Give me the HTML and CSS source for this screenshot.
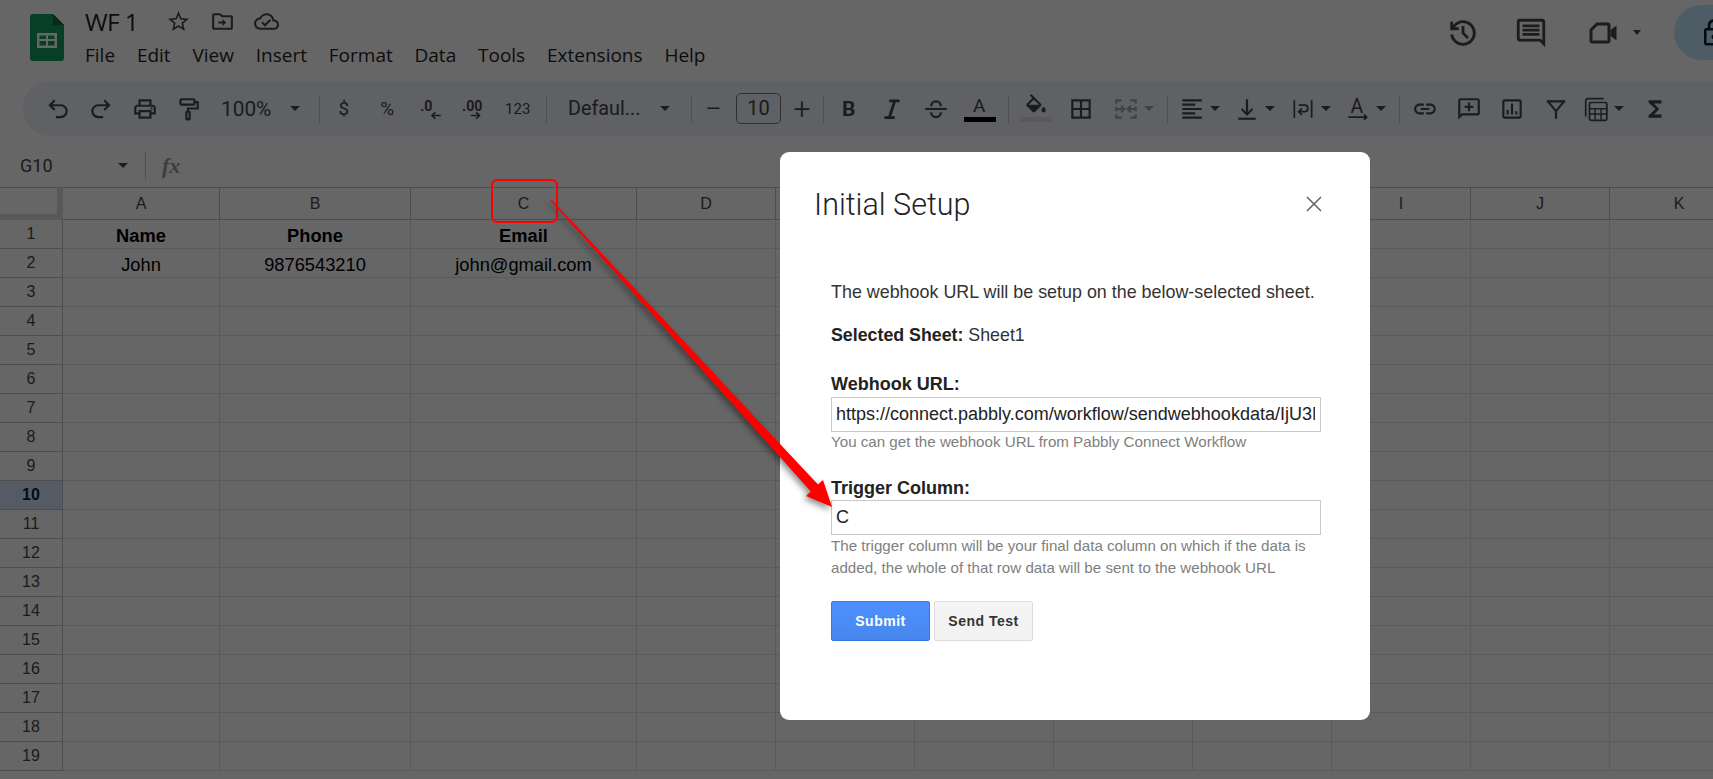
FILE: index.html
```html
<!DOCTYPE html>
<html lang="en">
<head>
    <meta charset="UTF-8">
    <title>WF 1 - Google Sheets</title>
    <link rel="stylesheet" href="styles.css">
</head>
<body>

    <header class="topbar">
        <svg class="logo" viewBox="0 0 34 47"><path fill="#0f9d58" d="M3 0h20l11 11v33a3 3 0 0 1-3 3H3a3 3 0 0 1-3-3V3a3 3 0 0 1 3-3z"/><path fill="#0a6b3c" d="M23 0l11 11H23z"/><path fill="#fff" d="M7 19h20v15H7zm2.500 2.500v3.500h6.500v-3.500zm8.500 0v3.500h6.500v-3.500zm-8.500 5.500v4.500h6.500v-4.500zm8.500 0v4.500h6.500v-4.500z" fill-rule="evenodd"/></svg>
        <div class="docinfo">
            <div class="titlerow">
                <span class="doctitle">WF 1</span>
                <svg class="ico-doc" viewBox="0 0 24 24"><path d="M22 9.240l-7.190-.62L12 2 9.190 8.630 2 9.240l5.460 4.730L5.820 21 12 17.270 18.180 21l-1.630-7.030L22 9.240zM12 15.400l-3.760 2.270 1-4.280-3.320-2.880 4.380-.38L12 6.100l1.710 4.040 4.380.38-3.320 2.880 1 4.280L12 15.400z"/></svg>
                <svg class="ico-doc" viewBox="0 0 24 24"><path d="M20 6h-8l-2-2H4c-1.100 0-2 .9-2 2v12c0 1.100.9 2 2 2h16c1.100 0 2-.9 2-2V8c0-1.100-.9-2-2-2zm0 12H4V6h5.170l2 2H20v10z"/><path d="M12 16.500l3.500-3.500-3.500-3.500v2.500H8v2h4z"/></svg>
                <svg class="ico-doc" viewBox="0 0 24 24"><path d="M19.350 10.040C18.670 6.590 15.640 4 12 4 9.110 4 6.600 5.640 5.350 8.040 2.340 8.360 0 10.910 0 14c0 3.310 2.690 6 6 6h13c2.760 0 5-2.240 5-5 0-2.640-2.050-4.780-4.650-4.960zM19 18H6c-2.210 0-4-1.790-4-4 0-2.050 1.530-3.760 3.560-3.970l1.070-.11.5-.95C8.080 7.140 9.940 6 12 6c2.620 0 4.880 1.860 5.390 4.430l.3 1.500 1.530.11c1.560.1 2.780 1.410 2.780 2.960 0 1.650-1.350 3-3 3z"/><path d="M10.500 14.200l-2.100-2.100-1.400 1.400 3.500 3.500 6-6-1.400-1.400z"/></svg>
            </div>
            <nav class="menubar">
                <span>File</span><span>Edit</span><span>View</span><span>Insert</span><span>Format</span><span>Data</span><span>Tools</span><span>Extensions</span><span>Help</span>
            </nav>
        </div>
        <div class="actions">
            <svg class="ico-top ico-history" viewBox="0 0 24 24"><path d="M12 21q-3.450 0-6.012-2.288T3.050 13H5.100q.35 2.600 2.313 4.300T12 19q2.925 0 4.963-2.038T19 12q0-2.925-2.038-4.963T12 5q-1.725 0-3.225.8T6.250 8H9v2H3V4h2v2.350q1.275-1.600 3.113-2.475T12 3q3.750 0 6.375 2.625T21 12q0 3.750-2.625 6.375T12 21zm2.800-4.800L11 12.400V7h2v4.600l3.200 3.200-1.400 1.400z"/></svg>
            <svg class="ico-top" viewBox="0 0 24 24"><path d="M20 2H4c-1.100 0-2 .9-2 2v12c0 1.100.9 2 2 2h14l4 4V4c0-1.100-.9-2-2-2zm0 15.170L18.830 16H4V4h16v13.170zM6 12h12v2H6zm0-3h12v2H6zm0-3h12v2H6z"/></svg>
            <svg class="ico-top cam" viewBox="0 0 24 24"><path class="line" d="M8 6h7a1 1 0 0 1 1 1v10a1 1 0 0 1-1 1H5a1 1 0 0 1-1-1V10z"/><path d="M17 10l4-3v10l-4-3z"/></svg>
            <i class="caret small"></i>
            <div class="share">
                <svg class="ico-lock" viewBox="0 0 24 24"><path d="M18 8h-1V6c0-2.760-2.240-5-5-5S7 3.240 7 6v2H6c-1.100 0-2 .9-2 2v10c0 1.100.9 2 2 2h12c1.100 0 2-.9 2-2V10c0-1.100-.9-2-2-2zM9 6c0-1.660 1.340-3 3-3s3 1.340 3 3v2H9V6zm9 14H6V10h12v10zm-6-3c1.100 0 2-.9 2-2s-.9-2-2-2-2 .9-2 2 .9 2 2 2z"/></svg>
            </div>
        </div>
    </header>

    <div class="toolbar">
        <span class="tb"><svg class="ico" viewBox="0 0 24 24"><path class="line" d="M9 13L4.500 8.500 9 4M5 8.500h9.500a5.500 5.500 0 0 1 0 11H10"/></svg></span>
        <span class="tb"><svg class="ico" viewBox="0 0 24 24"><path class="line" d="M15 13l4.500-4.500L15 4M19 8.500H9.500a5.500 5.500 0 0 0 0 11H14"/></svg></span>
        <span class="tb"><svg class="ico" viewBox="0 0 24 24"><path d="M19 8h-1V3H6v5H5c-1.660 0-3 1.340-3 3v6h4v4h12v-4h4v-6c0-1.660-1.340-3-3-3zM8 5h8v3H8V5zm8 14H8v-4h8v4zm2-4v-2H6v2H4v-4c0-.55.45-1 1-1h14c.55 0 1 .45 1 1v4h-2z"/><circle cx="18" cy="11.500" r="1"/></svg></span>
        <span class="tb"><svg class="ico" viewBox="0 0 24 24"><rect class="line" x="5" y="3" width="13" height="5" rx="1"/><path class="line" d="M18 5.500h3v6h-9v3"/><rect class="line" x="10.500" y="14.500" width="3" height="7" rx=".5"/></svg></span>
        <span class="tb-zoom">100%<i class="caret"></i></span>
        <i class="sep sep-zoom"></i>
        <span class="tb tb-txt">$</span>
        <span class="tb tb-txt">%</span>
        <span class="tb"><svg class="ico" viewBox="0 0 24 24"><text x="2" y="14" class="mini">.0</text><path class="line thin" d="M21 18h-8M16 15l-3 3 3 3"/></svg></span>
        <span class="tb"><svg class="ico" viewBox="0 0 24 24"><text x="1" y="14" class="mini">.00</text><path class="line thin" d="M9 18h8M14 15l3 3-3 3"/></svg></span>
        <span class="tb tb-num">123</span>
        <i class="sep sep-num"></i>
        <span class="tb-font">Defaul...<i class="caret"></i></span>
        <i class="sep"></i>
        <span class="tb tb-size">&minus;</span>
        <span class="sizebox">10</span>
        <span class="tb tb-size">+</span>
        <i class="sep sep-size"></i>
        <span class="tb tb-b">B</span>
        <span class="tb"><svg class="ico" viewBox="0 0 24 24"><path class="line wide" d="M9.500 4.500H19M5 20h9.500M14.500 4.500L9.500 20"/></svg></span>
        <span class="tb"><svg class="ico" viewBox="0 0 24 24"><path class="line" d="M2 12h20M7.500 9.500a4.500 4.500 0 0 1 9 0M7.500 15a4.500 4.500 0 0 0 9 0"/></svg></span>
        <span class="tb tb-color">A<i class="bar bar-black"></i></span>
        <i class="sep sep-style"></i>
        <span class="tb tb-fill"><svg class="ico" viewBox="0 0 24 24"><path d="M16.560 8.940L7.620 0 6.210 1.410l2.380 2.380-5.150 5.150c-.59.59-.59 1.540 0 2.120l5.500 5.500c.29.29.68.44 1.060.44s.77-.15 1.060-.44l5.500-5.500c.59-.58.59-1.530 0-2.120zM5.210 10L10 5.210 14.790 10H5.210zM19 11.500s-2 2.170-2 3.500c0 1.100.9 2 2 2s2-.9 2-2c0-1.330-2-3.500-2-3.500z"/></svg><i class="bar bar-fill"></i></span>
        <span class="tb tb-borders"><svg class="ico" viewBox="0 0 24 24"><path d="M3 3v18h18V3H3zm8 16H5v-6h6v6zm0-8H5V5h6v6zm8 8h-6v-6h6v6zm0-8h-6V5h6v6z"/></svg></span>
        <span class="tb-drop dim"><svg class="ico" viewBox="0 0 24 24"><path class="line" d="M8 4H3v3M3 10v4M3 17v3h5M16 4h5v3M21 10v4M21 17v3h-5M3 12h7M7.500 9l3 3-3 3M21 12h-7M16.500 9l-3 3 3 3"/></svg><i class="caret"></i></span>
        <i class="sep sep-merge"></i>
        <span class="tb-drop"><svg class="ico" viewBox="0 0 24 24"><path d="M15 15H3v2h12v-2zm0-8H3v2h12V7zM3 13h18v-2H3v2zm0 8h18v-2H3v2zM3 3v2h18V3H3z"/></svg><i class="caret"></i></span>
        <span class="tb-drop"><svg class="ico" viewBox="0 0 24 24"><path class="line" d="M12 3v14M7 12l5 5 5-5"/><path d="M4 20h16v2H4z"/></svg><i class="caret"></i></span>
        <span class="tb-drop"><svg class="ico" viewBox="0 0 24 24"><path class="line thin" d="M4 4v16M20 4v16M8 8.500h5.500a3 3 0 0 1 0 6H8M11 11.500l-3 3 3 3"/></svg><i class="caret"></i></span>
        <span class="tb-drop"><svg class="ico" viewBox="0 0 24 24"><text x="5" y="16" class="mini mini-a">A</text><path class="line thin" d="M3 19.500h17M17.500 17l2.500 2.500-2.500 2.500"/></svg><i class="caret"></i></span>
        <i class="sep sep-rot"></i>
        <span class="tb"><svg class="ico" viewBox="0 0 24 24"><path d="M3.900 12c0-1.710 1.390-3.100 3.100-3.100h4V7H7c-2.760 0-5 2.240-5 5s2.240 5 5 5h4v-1.900H7c-1.710 0-3.100-1.390-3.100-3.100zM8 13h8v-2H8v2zm9-6h-4v1.900h4c1.710 0 3.100 1.390 3.100 3.100s-1.390 3.100-3.100 3.100h-4V17h4c2.760 0 5-2.240 5-5s-2.240-5-5-5z"/></svg></span>
        <span class="tb"><svg class="ico" viewBox="0 0 24 24"><path d="M20 2H4c-1.100 0-2 .9-2 2v18l4-4h14c1.100 0 2-.9 2-2V4c0-1.100-.9-2-2-2zm0 14H5.170L4 17.170V4h16v12zM11 6h2v3h3v2h-3v3h-2v-3H8V9h3z"/></svg></span>
        <span class="tb"><svg class="ico" viewBox="0 0 24 24"><path d="M19 3H5c-1.100 0-2 .9-2 2v14c0 1.100.9 2 2 2h14c1.100 0 2-.9 2-2V5c0-1.100-.9-2-2-2zm0 16H5V5h14v14zM7 13h2v4H7zm4-6h2v10h-2zm4 7h2v3h-2z"/></svg></span>
        <span class="tb"><svg class="ico" viewBox="0 0 24 24"><path class="line" d="M3.500 5h17M4.500 5l7.500 9 7.500-9M12 14v7"/></svg></span>
        <span class="tb-drop tb-calc"><svg class="ico" viewBox="0 0 24 24"><path class="line thin" d="M19 2.500H4.500a2 2 0 0 0-2 2V19"/><rect class="line thin" x="6" y="6" width="16" height="16.500" rx="1.500"/><path d="M6 11h16v1.500H6zM10.500 12h1.300v10h-1.300zM16 12h1.300v10H16zM6 16h16v1.300H6z"/></svg><i class="caret"></i></span>
        <span class="tb"><svg class="ico" viewBox="0 0 24 24"><path d="M18 4H6v2l6.500 6L6 18v2h12v-3h-7l5-5-5-5h7z"/></svg></span>
    </div>

    <div class="formulabar">
        <span class="namebox">G10<i class="caret"></i></span>
        <i class="sep"></i>
        <span class="fx">fx</span>
    </div>

    <table class="sheet">
        <colgroup>
            <col class="c-row"><col class="c-a"><col class="c-b"><col class="c-c">
            <col class="c-d"><col class="c-d"><col class="c-d"><col class="c-d"><col class="c-d"><col class="c-d"><col class="c-d"><col class="c-d">
        </colgroup>
        <tr class="heads"><th class="corner"></th><th>A</th><th>B</th><th>C</th><th>D</th><th></th><th></th><th></th><th></th><th>I</th><th>J</th><th>K</th></tr>
        <tr><th>1</th><td class="bold">Name</td><td class="bold">Phone</td><td class="bold">Email</td><td></td><td></td><td></td><td></td><td></td><td></td><td></td><td></td></tr>
        <tr><th>2</th><td>John</td><td>9876543210</td><td>john@gmail.com</td><td></td><td></td><td></td><td></td><td></td><td></td><td></td><td></td></tr>
        <tr><th>3</th><td></td><td></td><td></td><td></td><td></td><td></td><td></td><td></td><td></td><td></td><td></td></tr>
        <tr><th>4</th><td></td><td></td><td></td><td></td><td></td><td></td><td></td><td></td><td></td><td></td><td></td></tr>
        <tr><th>5</th><td></td><td></td><td></td><td></td><td></td><td></td><td></td><td></td><td></td><td></td><td></td></tr>
        <tr><th>6</th><td></td><td></td><td></td><td></td><td></td><td></td><td></td><td></td><td></td><td></td><td></td></tr>
        <tr><th>7</th><td></td><td></td><td></td><td></td><td></td><td></td><td></td><td></td><td></td><td></td><td></td></tr>
        <tr><th>8</th><td></td><td></td><td></td><td></td><td></td><td></td><td></td><td></td><td></td><td></td><td></td></tr>
        <tr><th>9</th><td></td><td></td><td></td><td></td><td></td><td></td><td></td><td></td><td></td><td></td><td></td></tr>
        <tr><th class="active">10</th><td></td><td></td><td></td><td></td><td></td><td></td><td></td><td></td><td></td><td></td><td></td></tr>
        <tr><th>11</th><td></td><td></td><td></td><td></td><td></td><td></td><td></td><td></td><td></td><td></td><td></td></tr>
        <tr><th>12</th><td></td><td></td><td></td><td></td><td></td><td></td><td></td><td></td><td></td><td></td><td></td></tr>
        <tr><th>13</th><td></td><td></td><td></td><td></td><td></td><td></td><td></td><td></td><td></td><td></td><td></td></tr>
        <tr><th>14</th><td></td><td></td><td></td><td></td><td></td><td></td><td></td><td></td><td></td><td></td><td></td></tr>
        <tr><th>15</th><td></td><td></td><td></td><td></td><td></td><td></td><td></td><td></td><td></td><td></td><td></td></tr>
        <tr><th>16</th><td></td><td></td><td></td><td></td><td></td><td></td><td></td><td></td><td></td><td></td><td></td></tr>
        <tr><th>17</th><td></td><td></td><td></td><td></td><td></td><td></td><td></td><td></td><td></td><td></td><td></td></tr>
        <tr><th>18</th><td></td><td></td><td></td><td></td><td></td><td></td><td></td><td></td><td></td><td></td><td></td></tr>
        <tr><th>19</th><td></td><td></td><td></td><td></td><td></td><td></td><td></td><td></td><td></td><td></td><td></td></tr>
    </table>

    <div class="overlay"></div>

    <div class="dialog">
        <div class="dialog-head">
            <h2>Initial Setup</h2>
            <svg class="close" viewBox="0 0 16 16"><path d="M1 1l14 14M15 1L1 15"/></svg>
        </div>
        <div class="dialog-body">
            <p class="intro">The webhook URL will be setup on the below-selected sheet.</p>
            <p class="selected"><b>Selected Sheet:</b> Sheet1</p>
            <label class="lbl lbl-url">Webhook URL:</label>
            <input class="field" type="text" value="https://connect.pabbly.com/workflow/sendwebhookdata/IjU3NjUxNDI5">
            <p class="hint">You can get the webhook URL from Pabbly Connect Workflow</p>
            <label class="lbl lbl-trigger">Trigger Column:</label>
            <input class="field" type="text" value="C">
            <p class="hint hint-two">The trigger column will be your final data column on which if the data is added, the whole of that row data will be sent to the webhook URL</p>
            <div class="buttons">
                <button class="btn btn-blue">Submit</button>
                <button class="btn btn-grey">Send Test</button>
            </div>
        </div>
    </div>

    <!-- annotation drawn on the screenshot -->
    <div class="markbox"></div>
    <svg class="arrow" viewBox="0 0 1713 779"><polygon points="551.500,199.500 818,484.600 823,480 832,507 806,496 810.800,491.400 550.500,200.500"/></svg>

</body>
</html>
```
FILE: styles.css
```css
* {
    box-sizing: border-box;
}

body {
    margin: 0;
    height: 779px;
    overflow: hidden;
    position: relative;
    background: #fff;
    color: #1f1f1f;
    font-family: "Roboto", "Liberation Sans", sans-serif;
}

svg {
    fill: #444746;
    flex: none;
}

.line {
    fill: none;
    stroke: #444746;
    stroke-width: 2;
}

.thin {
    stroke-width: 1.6;
}

.wide {
    stroke-width: 2.600;
}

.caret {
    display: inline-block;
    width: 0;
    height: 0;
    border-left: 5.500px solid transparent;
    border-right: 5.500px solid transparent;
    border-top: 5.500px solid #444746;
    flex: none;
}

.caret.small {
    border-width: 5px 4.500px 0;
}

.sep {
    display: block;
    width: 1px;
    height: 28px;
    background: #c7c7c7;
    flex: none;
}

/* top bar */
.topbar {
    display: flex;
    height: 81px;
    padding-left: 30px;
}

.logo {
    width: 34px;
    height: 47px;
    margin-top: 14px;
}

.docinfo {
    margin-left: 21px;
}

.titlerow {
    display: flex;
    align-items: center;
    height: 26px;
    margin-top: 8px;
}

.doctitle {
    width: 81px;
    font-size: 24.500px;
    font-family: "Open Sans", sans-serif;
    letter-spacing: -.6px;
}

.ico-doc {
    width: 25px;
    height: 25px;
    margin-right: 19px;
}

.menubar {
    display: flex;
    margin-top: 7px;
    gap: 21.800px;
    font-size: 19px;
    line-height: 28px;
    font-family: "Open Sans", sans-serif;
}

.actions {
    margin-left: auto;
    display: flex;
    align-items: center;
    height: 65px;
}

.ico-top {
    width: 34px;
    height: 34px;
    margin-right: 37px;
}

.ico-history {
    margin-right: 34px;
}

.cam {
    margin-right: 12px;
    width: 36px;
    height: 36px;
}

.share {
    width: 39px;
    height: 55px;
    margin-left: 33px;
    padding: 13px 0 0 25px;
    background: #c2e7ff;
    border-radius: 28px 0 0 28px;
    overflow: hidden;
}

.ico-lock {
    width: 30px;
    height: 30px;
    fill: #001d35;
}

/* toolbar */
.toolbar {
    display: flex;
    align-items: center;
    height: 55px;
    margin-left: 23px;
    padding-left: 13px;
    background: #edf2fa;
    border-radius: 27px 0 0 27px;
    color: #444746;
}

.ico {
    width: 26px;
    height: 26px;
}

.tb {
    width: 43.500px;
    flex: none;
    display: flex;
    align-items: center;
    justify-content: center;
}

.tb-zoom {
    width: 109px;
    padding-left: 11px;
    display: flex;
    align-items: center;
    font-size: 20.800px;
    flex: none;
}

.tb-zoom .caret {
    margin-left: 19px;
}

.tb-txt {
    font-size: 19px;
}

.tb-num {
    font-size: 15px;
}

.mini {
    font-size: 13px;
    font-weight: 700;
    fill: #444746;
    font-family: "Roboto", sans-serif;
}

.mini-a {
    font-size: 18px;
    font-weight: 400;
}

.tb-font {
    width: 144px;
    padding-left: 21px;
    display: flex;
    align-items: center;
    font-size: 19.800px;
    flex: none;
}

.tb-font .caret {
    margin-left: 20px;
}

.tb-size {
    width: 42px;
    font-size: 30px;
    font-weight: 300;
}

.sizebox {
    width: 45px;
    height: 31px;
    margin-left: 2px;
    border: 1px solid #747775;
    border-radius: 5px;
    text-align: center;
    font-size: 20px;
    line-height: 29px;
    flex: none;
}

.sep-zoom { margin-right: 2px; }
.sep-num { margin-left: 6.500px; }
.sep-size { margin-right: 3px; }
.sep-style { margin: 0 5px 0 7px; }
.sep-merge { margin-right: 9px; }
.sep-rot { margin-right: 4px; }

.tb-borders {
    margin: 0 8px 0 2px;
}

.tb-b {
    font-size: 21px;
    font-weight: 700;
}

.tb-color, .tb-fill {
    position: relative;
    height: 44px;
}

.tb-color {
    font-size: 19px;
    align-items: flex-start;
    padding-top: 7px;
}

.bar {
    position: absolute;
    left: 6px;
    bottom: 8.500px;
    width: 32px;
    height: 5px;
}

.bar-black {
    background: #000;
}

.bar-fill {
    background: #dedede;
}

.tb-fill {
    align-items: flex-start;
    padding-top: 7px;
}

.tb-drop {
    width: 55.500px;
    flex: none;
    display: flex;
    align-items: center;
    padding-left: 2px;
    gap: 5px;
}

.tb-calc {
    width: 56px;
    padding-left: 5px;
}

.dim {
    opacity: .45;
}

/* formula bar */
.formulabar {
    display: flex;
    align-items: center;
    height: 51px;
    padding: 8px 0 0 20px;
    color: #444746;
}

.namebox {
    width: 125px;
    display: flex;
    justify-content: space-between;
    align-items: center;
    padding-right: 17px;
    font-size: 18px;
}

.fx {
    margin-left: 16px;
    font-family: "Liberation Serif", serif;
    font-style: italic;
    font-weight: 700;
    font-size: 22px;
    color: #9a9a9a;
}

/* sheet */
.sheet {
    border-collapse: separate;
    border-spacing: 0;
    table-layout: fixed;
    width: 1749px;
    font-family: "Liberation Sans", sans-serif;
    font-size: 18.300px;
    color: #000;
}

.c-row { width: 63px; }
.c-a { width: 157px; }
.c-b { width: 191px; }
.c-c { width: 226px; }
.c-d { width: 139px; }

.sheet tr {
    height: 29px;
}

.sheet td {
    padding: 3px 0 0;
    text-align: center;
    border-right: 1px solid #e1e1e1;
    border-bottom: 1px solid #e1e1e1;
    overflow: hidden;
    white-space: nowrap;
}

.sheet th {
    padding: 0;
    font-size: 16px;
    font-weight: 400;
    color: #444746;
    border-right: 1px solid #c0c0c0;
    border-bottom: 1px solid #c0c0c0;
}

.sheet .bold {
    font-weight: 700;
}

.sheet .heads {
    height: 33px;
}

.sheet .heads th {
    border-top: 1px solid #c0c0c0;
}

.sheet .corner {
    border-right: 6px solid #dcdcdc;
    border-bottom: 6px solid #dcdcdc;
}

.sheet .active {
    background: #d3e3fd;
    font-weight: 700;
    color: #041e49;
}

/* modal */
.overlay {
    position: absolute;
    inset: 0;
    background: rgba(0, 0, 0, .6);
}

.dialog {
    position: absolute;
    left: 780px;
    top: 152px;
    width: 590px;
    height: 568px;
    background: #fff;
    border-radius: 9px;
    font-family: "Liberation Sans", sans-serif;
    color: #333;
}

.dialog-head {
    display: flex;
    align-items: center;
    justify-content: space-between;
    height: 104px;
    padding: 0 48px 0 34px;
}

.dialog-head h2 {
    margin: 0;
    font-family: "Roboto", sans-serif;
    font-weight: 300;
    font-size: 30.500px;
    color: #202124;
}

.close {
    width: 16px;
    height: 16px;
    margin-bottom: 1px;
}

.close path {
    fill: none;
    stroke: #5f6368;
    stroke-width: 1.500;
}

.dialog-body {
    padding: 24px 49px 0 51px;
}

.dialog-body p {
    margin: 0;
}

.intro {
    font-size: 17.900px;
    line-height: 24px;
}

.dialog-body .selected {
    margin-top: 19px;
    font-size: 17.800px;
    line-height: 24px;
}

.selected b {
    color: #222;
}

.lbl {
    display: block;
    font-weight: 700;
    font-size: 18px;
    line-height: 20px;
    color: #222;
}

.lbl-url {
    margin: 27px 0 3px;
}

.lbl-trigger {
    margin: 26px 0 2px;
}

.field {
    display: block;
    width: 490px;
    height: 35px;
    padding: 0 5px 0 4px;
    border: 1px solid #c8c8c8;
    font-family: "Liberation Sans", sans-serif;
    font-size: 18px;
    color: #222;
    outline: none;
}

.hint {
    font-size: 15.150px;
    line-height: 20px;
    color: #808080;
}

.dialog-body .hint-two {
    line-height: 22px;
}

.buttons {
    display: flex;
    gap: 4px;
    margin-top: 22px;
}

.btn {
    width: 99px;
    height: 40px;
    padding: 0;
    border-radius: 2px;
    font-family: "Liberation Sans", sans-serif;
    font-weight: 700;
    font-size: 14px;
    letter-spacing: .5px;
}

.btn-blue {
    color: #fff;
    background: linear-gradient(#4d90fe, #4787ed);
    border: 1px solid #3079ed;
}

.btn-grey {
    color: #333;
    background: linear-gradient(#f5f5f5, #f1f1f1);
    border: 1px solid #dcdcdc;
}

/* red annotations */
.markbox {
    position: absolute;
    left: 491px;
    top: 179px;
    width: 67px;
    height: 44px;
    border: 2.500px solid #f00;
    border-radius: 6px;
}

.arrow {
    position: absolute;
    left: 0;
    top: 0;
    width: 1713px;
    height: 779px;
    fill: #f00;
    filter: drop-shadow(-2px 3px 3px rgba(0, 0, 0, .45));
}
```
